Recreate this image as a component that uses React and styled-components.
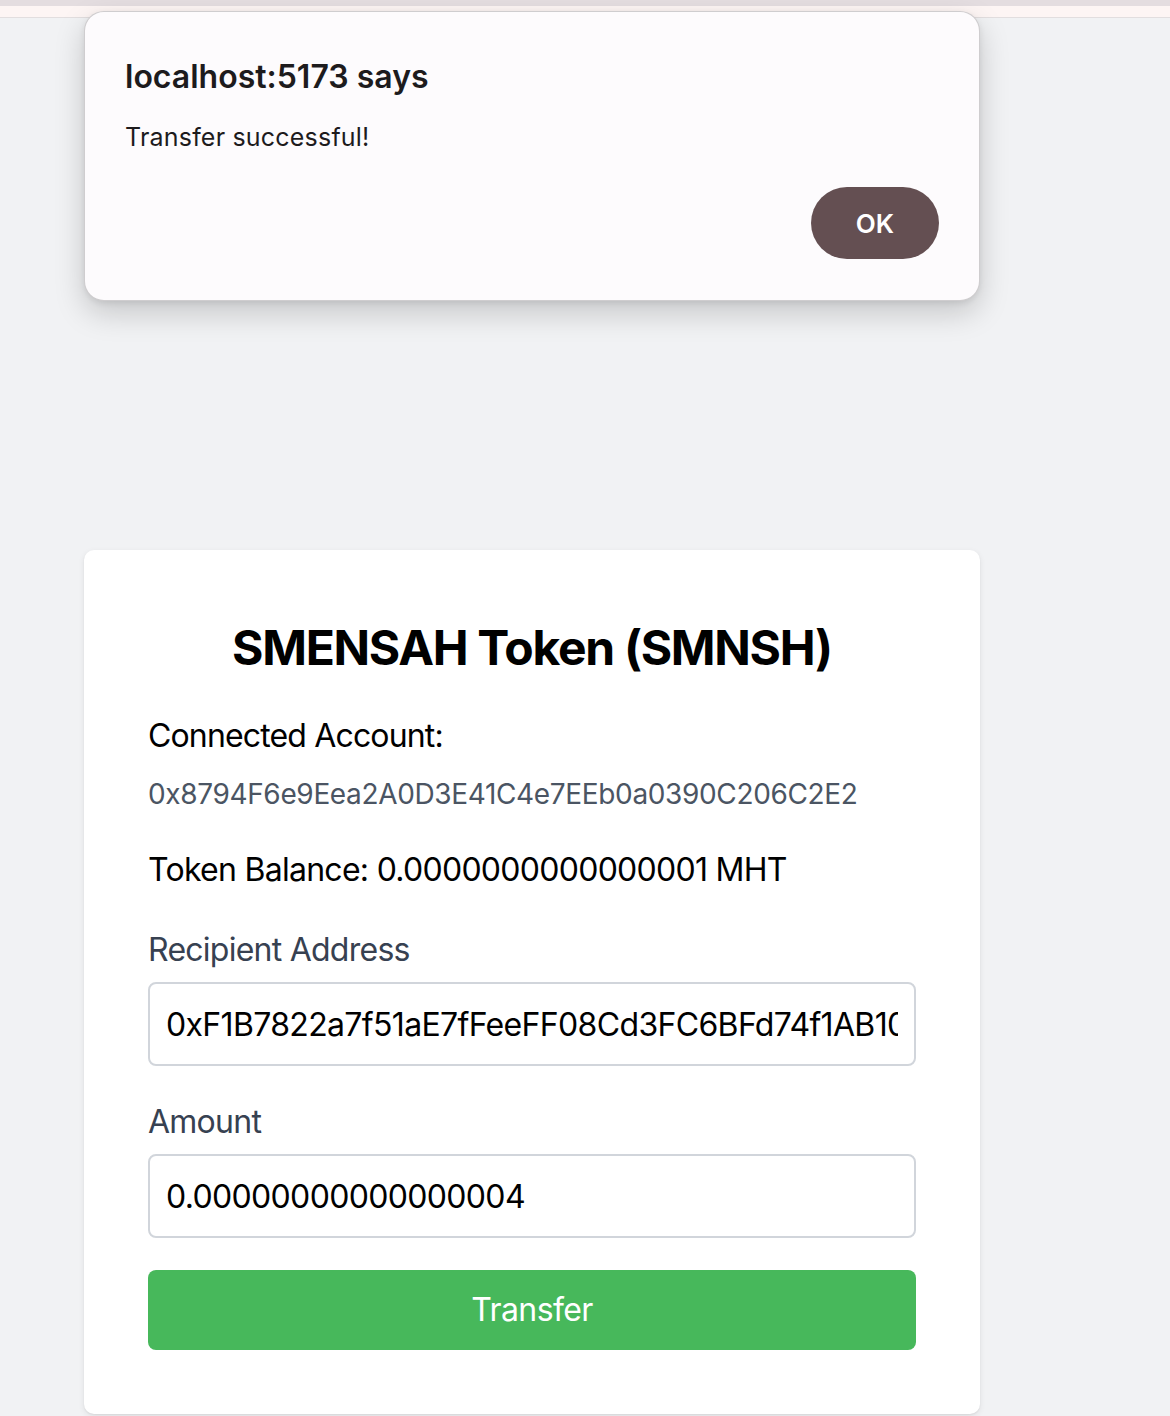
import React from 'react';
import styled, { createGlobalStyle } from 'styled-components';

const GlobalStyle = createGlobalStyle`
  html, body {
    margin: 0;
    padding: 0;
    background: #f1f2f4;
    font-family: Inter, "Noto Sans", "Liberation Sans", sans-serif;
    color: #000;
  }
  * {
    box-sizing: border-box;
  }
`;

const Screen = styled.div`
  position: relative;
  width: 1170px;
  min-height: 1416px;
  overflow: hidden;
  background: #f1f2f4;
`;

const TopBar = styled.div`
  height: 6px;
  background: #e4dde0;
`;

const TopStrip = styled.div`
  height: 12px;
  background: #fdf5f4;
  border-bottom: 1px solid #e2dedf;
`;

const Main = styled.main`
  padding: 532px 0 0 84px;
`;

const Card = styled.div`
  width: 896px;
  padding: 64px;
  background: #fff;
  border-radius: 10px;
  box-shadow: 0 2px 6px rgba(0, 0, 0, 0.08), 0 1px 2px rgba(0, 0, 0, 0.06);
`;

const Title = styled.h1`
  margin: 2px 0 32px;
  font-size: 48px;
  line-height: 64px;
  font-weight: 700;
  text-align: center;
  letter-spacing: -1.3px;
`;

const AccountBlock = styled.div`
  margin-bottom: 32px;
`;

const Text = styled.p`
  margin: 0;
  font-size: 32px;
  line-height: 48px;
  letter-spacing: ${(p) => p.spacing || '-0.75px'};
  color: #000;
`;

const Address = styled.p`
  margin: 14px 0 0;
  font-size: 28px;
  line-height: 40px;
  color: #4b5563;
  letter-spacing: -0.35px;
`;

const Field = styled.div`
  margin-top: 32px;
`;

const Label = styled.label`
  display: block;
  margin-bottom: 8px;
  font-size: 32px;
  line-height: 48px;
  color: #374151;
  letter-spacing: -0.75px;
`;

const Input = styled.input`
  display: block;
  width: 100%;
  height: 84px;
  padding: 16px;
  border: 2px solid #d1d5db;
  border-radius: 8px;
  font-family: inherit;
  font-size: 32px;
  line-height: 48px;
  color: #000;
  letter-spacing: -0.66px;
  background: #fff;
  outline: none;
`;

const TransferButton = styled.button`
  display: block;
  width: 100%;
  height: 80px;
  margin-top: 32px;
  border: none;
  border-radius: 8px;
  background: #47b85b;
  color: #fff;
  font-family: inherit;
  font-size: 32px;
  line-height: 48px;
  letter-spacing: -0.6px;
  cursor: pointer;
`;

const Dialog = styled.div`
  position: absolute;
  top: 11px;
  left: 84px;
  width: 896px;
  height: 290px;
  padding: 46px 40px 40px;
  background: #fdfbfd;
  border: 1px solid rgba(0, 0, 0, 0.18);
  border-radius: 20px;
  box-shadow: 0 12px 30px rgba(0, 0, 0, 0.18), 0 2px 6px rgba(0, 0, 0, 0.08);
  display: flex;
  flex-direction: column;
`;

const DialogTitle = styled.div`
  font-size: 32px;
  line-height: 38px;
  font-weight: 600;
  color: #1d1b1d;
`;

const DialogMessage = styled.div`
  margin-top: 24px;
  font-size: 25px;
  line-height: 34px;
  color: #1d1b1d;
  letter-spacing: 0.2px;
`;

const DialogActions = styled.div`
  display: flex;
  justify-content: flex-end;
  margin-top: 33px;
`;

const OkButton = styled.button`
  width: 128px;
  height: 72px;
  border: none;
  border-radius: 36px;
  background: #644f52;
  color: #fff;
  font-family: inherit;
  font-size: 26px;
  font-weight: 600;
`;

export default function App() {
  return (
    <Screen>
      <GlobalStyle />
      <TopBar />
      <TopStrip />
      <Main>
        <Card>
          <Title>SMENSAH Token (SMNSH)</Title>
          <AccountBlock>
            <Text spacing="-0.85px">Connected Account:</Text>
            <Address>0x8794F6e9Eea2A0D3E41C4e7EEb0a0390C206C2E2</Address>
          </AccountBlock>
          <Text spacing="-0.72px">Token Balance: 0.0000000000000001 MHT</Text>
          <Field>
            <Label>Recipient Address</Label>
            <Input readOnly value="0xF1B7822a7f51aE7fFeeFF08Cd3FC6BFd74f1AB10" />
          </Field>
          <Field>
            <Label>Amount</Label>
            <Input readOnly value="0.00000000000000004" />
          </Field>
          <TransferButton>Transfer</TransferButton>
        </Card>
      </Main>
      <Dialog>
        <DialogTitle>localhost:5173 says</DialogTitle>
        <DialogMessage>Transfer successful!</DialogMessage>
        <DialogActions>
          <OkButton>OK</OkButton>
        </DialogActions>
      </Dialog>
    </Screen>
  );
}
